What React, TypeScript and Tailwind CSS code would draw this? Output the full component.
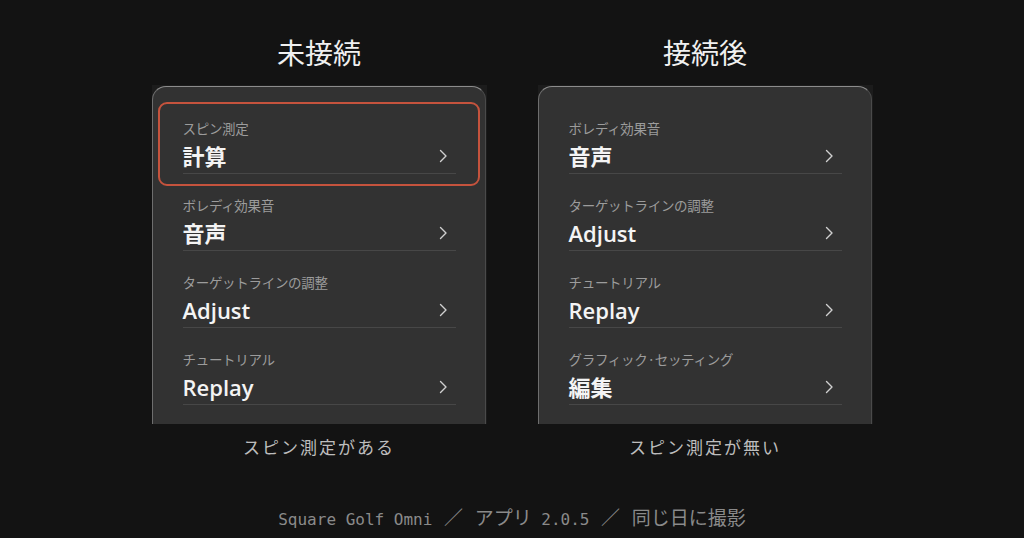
import React from "react";

function Chevron() {
  return (
    <svg width="9" height="14" viewBox="0 0 9 14" className="mr-[8px]">
      <polyline points="1.5,1.5 7,7 1.5,12.5" fill="none" stroke="#d0d0d0" strokeWidth="1.4" strokeLinecap="round" strokeLinejoin="round" />
    </svg>
  );
}

function Row({ label, value }: { label: string; value: string }) {
  return (
    <div className="h-[77px] flex flex-col">
      <div className="h-[16px] leading-[16px] text-[13.5px] text-[#9c9c9c] font-['Noto_Sans_CJK_JP',sans-serif] tracking-[-0.3px]">
        {label}
      </div>
      <div className="mt-[8px] h-[24px] flex items-center justify-between">
        <span className="text-[22px] leading-[24px] font-semibold text-[#f4f4f4] font-['Open_Sans','Noto_Sans_CJK_JP',sans-serif]">
          {value}
        </span>
        <Chevron />
      </div>
      <div className="mt-[5px] h-px bg-[#474747]" />
    </div>
  );
}

function Column({ title, caption, rows, highlight }: { title: string; caption: string; rows: [string, string][]; highlight?: boolean }) {
  return (
    <div className="w-[335px] flex flex-col items-center">
      <div className="mt-[34px] h-[36px] leading-[36px] text-[28px] text-[#f0f0f0] font-['Noto_Sans_CJK_JP',sans-serif]">
        {title}
      </div>
      <div className="mt-[15px] w-[335px] h-[339px] bg-[#1c1c1c] pt-[1px] pr-[1px] overflow-hidden">
        <div className="relative h-[360px] rounded-t-[14px] border-t border-l border-r border-t-[#8c8c8c] border-l-[#6e6e6e] border-r-[#4a4a4a] bg-[#323232] pt-[33px] pl-[30px] pr-[29px]">
          {highlight && (
            <div className="absolute left-[5px] top-[15px] w-[322px] h-[84px] rounded-[9px] border-2 border-[#c5533d]" />
          )}
          {rows.map(([l, v]) => (
            <Row key={l} label={l} value={v} />
          ))}
        </div>
      </div>
      <div className="mt-[11px] h-[24px] leading-[24px] text-[17px] tracking-[2px] text-[#bdbdbd] font-['Noto_Sans_CJK_JP',sans-serif]">
        {caption}
      </div>
    </div>
  );
}

export default function App() {
  return (
    <div className="w-[1024px] h-[538px] bg-[#131313] flex flex-col items-center overflow-hidden">
      <div className="flex gap-[51px]">
        <Column
          title="未接続"
          caption="スピン測定がある"
          highlight
          rows={[
            ["スピン測定", "計算"],
            ["ボレディ効果音", "音声"],
            ["ターゲットラインの調整", "Adjust"],
            ["チュートリアル", "Replay"],
          ]}
        />
        <Column
          title="接続後"
          caption="スピン測定が無い"
          rows={[
            ["ボレディ効果音", "音声"],
            ["ターゲットラインの調整", "Adjust"],
            ["チュートリアル", "Replay"],
            ["グラフィック·セッティング", "編集"],
          ]}
        />
      </div>
      <div className="mt-[46px] h-[24px] leading-[24px] flex items-baseline text-[#8a8a8a] whitespace-pre">
        <span className="text-[16px] font-['DejaVu_Sans_Mono','Liberation_Mono',monospace]">Square Golf Omni </span>
        <span className="text-[19px] mx-[2px] font-['Noto_Sans_CJK_JP',sans-serif]">／</span>
        <span className="text-[16px] font-['DejaVu_Sans_Mono','Liberation_Mono',monospace]"> </span>
        <span className="text-[19px] font-['Noto_Sans_CJK_JP',sans-serif]">アプリ</span>
        <span className="text-[16px] font-['DejaVu_Sans_Mono','Liberation_Mono',monospace]"> 2.0.5 </span>
        <span className="text-[19px] mx-[2px] font-['Noto_Sans_CJK_JP',sans-serif]">／</span>
        <span className="text-[16px] font-['DejaVu_Sans_Mono','Liberation_Mono',monospace]"> </span>
        <span className="text-[19px] font-['Noto_Sans_CJK_JP',sans-serif]">同じ日に撮影</span>
      </div>
    </div>
  );
}
